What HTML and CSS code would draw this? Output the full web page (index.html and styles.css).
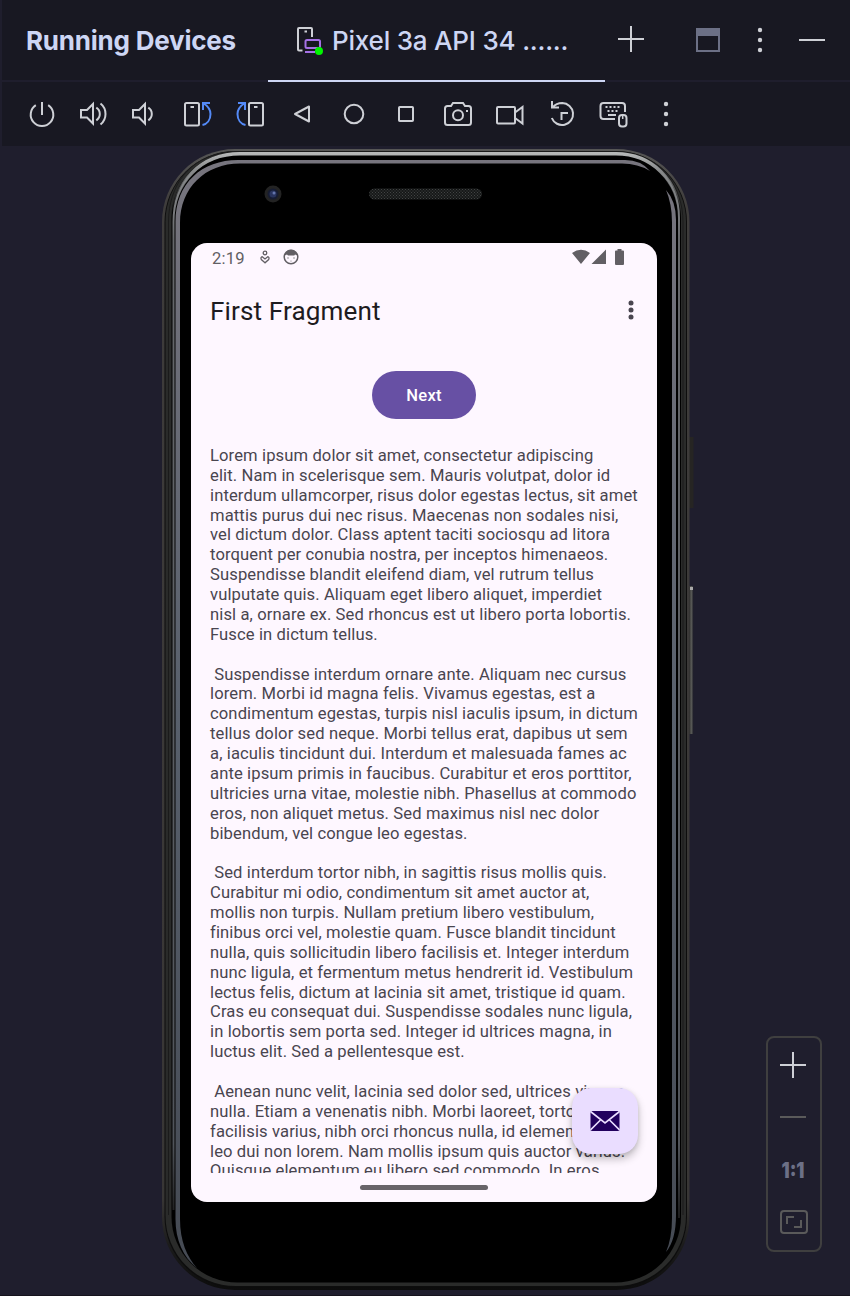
FILE: index.html
```html
<!DOCTYPE html>
<html lang="en">
<head>
<meta charset="utf-8">
<title>Running Devices</title>
<link rel="stylesheet" href="styles.css">
</head>
<body>
<div class="window">
  <header class="tabbar">
    <h1 class="tool-title">Running Devices</h1>
    <div class="tab">
      <svg class="tab-icon" width="28" height="30" viewBox="0 0 28 30" fill="none" stroke-width="2">
        <path d="M6.500 25.500H3Q2 25.500 2 24.500V4Q2 3 3 3H15Q16 3 16 4V12M8.500 6.500H11" stroke="#ced0d6"/>
        <rect x="9.500" y="15" width="14.500" height="8" rx="1.500" stroke="#a571e6"/>
        <path d="M9 27H19" stroke="#a571e6"/>
        <circle cx="23" cy="26" r="4" fill="#00f500"/>
      </svg>
      <span class="tab-label">Pixel 3a API 34 ......</span>
    </div>
    <svg class="add" width="28" height="28" viewBox="0 0 28 28" stroke="#ced0d6" stroke-width="2"><path d="M14 1V27M1 14H27"/></svg>
    <svg class="win-icon" width="24" height="24" viewBox="0 0 24 24"><path d="M1 1H23V23H1Z" fill="none" stroke="#6c7086" stroke-width="2"/><path d="M0 0H24V8H0Z" fill="#6c7086"/></svg>
    <svg class="more" width="6" height="26" viewBox="0 0 6 26" fill="#ced0d6"><circle cx="3" cy="3" r="2.200"/><circle cx="3" cy="13" r="2.200"/><circle cx="3" cy="23" r="2.200"/></svg>
    <svg class="hide" width="26" height="2" viewBox="0 0 26 2"><path d="M0 1H26" stroke="#ced0d6" stroke-width="2"/></svg>
  </header>

  <nav class="toolbar">
    <svg class="tool" viewBox="0 0 32 32"><path d="M16 4V17M9.800 7.200A11.300 11.300 0 1 0 22.200 7.200"/></svg>
    <svg class="tool" viewBox="0 0 32 32"><path d="M3 12H9L15 6V25.500L9 19.500H3ZM18.300 9.700Q21.800 12 21.800 16T18.300 22.300M22.500 5.500Q27.500 9.500 27.500 16T22.500 26.500"/></svg>
    <svg class="tool" viewBox="0 0 32 32"><path d="M3 12H9L15 6V25.500L9 19.500H3ZM18.300 9.700Q21.800 12 21.800 16T18.300 22.300"/></svg>
    <svg class="tool" viewBox="0 0 32 32"><rect x="3" y="5" width="14" height="22.500" rx="1.500"/><path d="M8.500 9H12"/><path class="blue" d="M28 5H21V12M21 5C26 8 28.500 12 28.500 16C28.500 22 25 26 20.500 27"/></svg>
    <svg class="tool" viewBox="0 0 32 32"><g transform="translate(32 0) scale(-1 1)"><rect x="3" y="5" width="14" height="22.500" rx="1.500"/><path d="M8.500 9H12"/><path class="blue" d="M28 5H21V12M21 5C26 8 28.500 12 28.500 16C28.500 22 25 26 20.500 27"/></g></svg>
    <svg class="tool" viewBox="0 0 32 32"><path d="M23 8.500V23.500L9 16Z" stroke-linejoin="round"/></svg>
    <svg class="tool" viewBox="0 0 32 32"><circle cx="16" cy="16" r="9.300"/></svg>
    <svg class="tool" viewBox="0 0 32 32"><rect x="9" y="9" width="14" height="14" rx=".8"/></svg>
    <svg class="tool" viewBox="0 0 32 32"><path d="M5.500 8H9L11 5H21L23 8H26.500Q29 8 29 10.500V24.500Q29 27 26.500 27H5.500Q3 27 3 24.500V10.500Q3 8 5.500 8Z"/><circle cx="16" cy="17.300" r="5"/><path d="M24 13H26"/></svg>
    <svg class="tool" viewBox="0 0 32 32"><rect x="3" y="9" width="18" height="16.500" rx="1"/><path d="M21 14.500L28.500 9V25.500L21 20"/></svg>
    <svg class="tool" viewBox="0 0 32 32"><path d="M6 3V9.500H13M6.500 9.500C9 6.500 12.500 5 16.300 5A11 11 0 1 1 5.800 20M15.500 22V15H22"/></svg>
    <svg class="tool" viewBox="0 0 32 32"><path d="M17 21H5.500Q2.500 21 2.500 18V8Q2.500 5 5.500 5H24Q27 5 27 8V14"/><path d="M7.500 9H22.500" stroke-dasharray="2 2"/><path d="M9.500 13H21" stroke-dasharray="2 2"/><path d="M10 17H18"/><rect x="21" y="17" width="7.500" height="11.500" rx="3"/><path d="M24.700 17V21" stroke-width="1.500"/></svg>
    <svg class="tool" viewBox="0 0 32 32"><g fill="#ced0d6" stroke="none"><circle cx="16" cy="6" r="2.200"/><circle cx="16" cy="16" r="2.200"/><circle cx="16" cy="26" r="2.200"/></g></svg>
  </nav>

  <main class="stage">
    <div class="phone">
      <svg class="shell" width="534" height="1146" viewBox="160 147 534 1146" fill="none">
        <defs>
          <linearGradient id="body" x1="0" y1="0" x2="0" y2="1"><stop offset="0" stop-color="#565655"/><stop offset=".05" stop-color="#3e3c3b"/><stop offset=".92" stop-color="#383635"/><stop offset=".96" stop-color="#1c1c1c"/><stop offset="1" stop-color="#0c0c0c"/></linearGradient>
          <linearGradient id="rim" x1="0" y1="0" x2="0" y2="1"><stop offset="0" stop-color="#c4c6c6"/><stop offset=".03" stop-color="#8b8d8f"/><stop offset=".08" stop-color="#66686b"/><stop offset=".93" stop-color="#50545a"/><stop offset="1" stop-color="#1c1c1c"/></linearGradient>
          <linearGradient id="glint" gradientUnits="userSpaceOnUse" x1="0" y1="152" x2="0" y2="215"><stop offset="0" stop-color="#b9bbbb"/><stop offset=".3" stop-color="#87898a"/><stop offset="1" stop-color="#66686b" stop-opacity="0"/></linearGradient>
          <linearGradient id="slate" x1="0" y1="0" x2="0" y2="1"><stop offset="0" stop-color="#77757e"/><stop offset=".5" stop-color="#58606c"/><stop offset="1" stop-color="#454a53"/></linearGradient>
          <linearGradient id="key" x1="0" y1="0" x2="1" y2="0"><stop offset="0" stop-color="#222"/><stop offset=".5" stop-color="#5c5d59"/><stop offset="1" stop-color="#20202a"/></linearGradient>
          <pattern id="mesh" width="3" height="3" patternUnits="userSpaceOnUse"><path d="M0 0H3V3H0Z" fill="#171919"/><path d="M0 0H1V1H0ZM1.500 1.500H2.500V2.500H1.500Z" fill="#424444"/></pattern>
        </defs>
        <path d="M689 437H693.500V508H689Z" fill="#262523"/>
        <path d="M689 586H693.500V734H689Z" fill="url(#key)"/>
        <path d="M690 587H693V590H690Z" fill="#aaa"/>
        <rect x="162" y="149" width="527.500" height="1141" rx="73" fill="url(#body)"/>
        <rect x="164.500" y="151" width="522.500" height="1136.500" rx="71" fill="#0d0d0d"/>
        <rect x="165.500" y="151.500" width="520.500" height="1134.500" rx="70" fill="#2a2b2a"/>
        <rect x="171.500" y="152" width="509.500" height="1130.500" rx="66" fill="#000"/>
        <path d="M168.500 1215V222C168.500 185 190 157 225 153H628C662 157 683 188 683 222V1215" stroke="#1b1b1b" stroke-width="1"/>
        <path d="M173.500 1210V222C173.500 182 201 153.800 240 153.800H616C651 153.800 679 180 679 218V1218" stroke="url(#rim)" stroke-width="2"/>
        <path d="M173 222C173 182 201 153.800 240 153.800H616C651 153.800 679.500 180 679.500 218" stroke="url(#glint)" stroke-width="3.500"/>
        <path d="M175.500 1219V222C175.500 183 202 160 238 160H625Q641 160 650 171Q638 163.500 622 163.500H240C205 163.500 180 188 180 223V1219C180 1241 187 1257 197 1268C183 1257 175.500 1240 175.500 1219ZM666 190Q676 201 676 220V1215Q676 1240 666 1252Q672 1238 672 1218V222Q672 204 666 190Z" fill="url(#slate)"/>
        <circle cx="273" cy="194" r="8.500" fill="#232323"/><circle cx="273" cy="194" r="5.500" fill="#161c32"/><circle cx="273" cy="194" r="3.500" fill="#29345e"/><circle cx="274" cy="193" r="1.500" fill="#6475ac"/>
        <rect x="369" y="188.500" width="113" height="11" rx="5.500" fill="url(#mesh)"/>
      </svg>
      <section class="screen">
        <div class="status">
          <span class="clock">2:19</span>
          <svg class="s-person" width="10" height="15" viewBox="0 0 10 15" fill="none" stroke="#625f64" stroke-width="1.300"><circle cx="5" cy="3" r="1.800"/><path d="M5 12.800L1.300 9.500Q.3 7.500 2.200 6.700L5 9L7.800 6.700Q9.700 7.500 8.700 9.500Z"/></svg>
          <svg class="s-face" width="16" height="16" viewBox="0 0 16 16"><circle cx="8" cy="8" r="6.800" fill="none" stroke="#625f64" stroke-width="1.500"/><path d="M1.500 6.500Q3 .8 8 .8T14.500 6.500L12 5.500L11.300 6.500H5L4 5.500Z" fill="#625f64"/><g fill="#777"><circle cx="5" cy="9" r=".7"/><circle cx="11" cy="9" r=".7"/><circle cx="8" cy="12" r=".6"/></g></svg>
          <svg class="s-right" width="53" height="16" viewBox="0 0 53 16" fill="#625f64"><path d="M0 4Q9-2.500 18 4L9 15ZM34 .5V15H19.500ZM43 2.500Q43 1.500 44 1.500H45.500V0H49.500V1.500H51Q52 1.500 52 2.500V15Q52 16 51 16H44Q43 16 43 15Z"/></svg>
        </div>
        <div class="appbar">
          <h2 class="app-title">First Fragment</h2>
          <svg width="6" height="20" viewBox="0 0 6 20" fill="#49454f"><circle cx="3" cy="3" r="2.500"/><circle cx="3" cy="10" r="2.500"/><circle cx="3" cy="17" r="2.500"/></svg>
        </div>
        <div class="content">
          <button class="next">Next</button>
          <div class="lorem">Lorem ipsum dolor sit amet, consectetur adipiscing
elit. Nam in scelerisque sem. Mauris volutpat, dolor id
interdum ullamcorper, risus dolor egestas lectus, sit amet
mattis purus dui nec risus. Maecenas non sodales nisi,
vel dictum dolor. Class aptent taciti sociosqu ad litora
torquent per conubia nostra, per inceptos himenaeos.
Suspendisse blandit eleifend diam, vel rutrum tellus
vulputate quis. Aliquam eget libero aliquet, imperdiet
nisl a, ornare ex. Sed rhoncus est ut libero porta lobortis.
Fusce in dictum tellus.

 Suspendisse interdum ornare ante. Aliquam nec cursus
lorem. Morbi id magna felis. Vivamus egestas, est a
condimentum egestas, turpis nisl iaculis ipsum, in dictum
tellus dolor sed neque. Morbi tellus erat, dapibus ut sem
a, iaculis tincidunt dui. Interdum et malesuada fames ac
ante ipsum primis in faucibus. Curabitur et eros porttitor,
ultricies urna vitae, molestie nibh. Phasellus at commodo
eros, non aliquet metus. Sed maximus nisl nec dolor
bibendum, vel congue leo egestas.

 Sed interdum tortor nibh, in sagittis risus mollis quis.
Curabitur mi odio, condimentum sit amet auctor at,
mollis non turpis. Nullam pretium libero vestibulum,
finibus orci vel, molestie quam. Fusce blandit tincidunt
nulla, quis sollicitudin libero facilisis et. Integer interdum
nunc ligula, et fermentum metus hendrerit id. Vestibulum
lectus felis, dictum at lacinia sit amet, tristique id quam.
Cras eu consequat dui. Suspendisse sodales nunc ligula,
in lobortis sem porta sed. Integer id ultrices magna, in
luctus elit. Sed a pellentesque est.

 Aenean nunc velit, lacinia sed dolor sed, ultrices viverra
nulla. Etiam a venenatis nibh. Morbi laoreet, tortor id
facilisis varius, nibh orci rhoncus nulla, id elementum
leo dui non lorem. Nam mollis ipsum quis auctor varius.
Quisque elementum eu libero sed commodo. In eros</div>
        </div>
        <div class="gesture"><span class="pill"></span></div>
        <button class="fab" aria-label="Mail">
          <svg width="30" height="22" viewBox="0 0 30 22"><rect x=".5" y="1" width="29" height="20" rx="1.500" fill="#21005d"/><path d="M.5 1.500L15 13L29.500 1.500M.5 20L10.500 10M29.500 20L19.500 10" fill="none" stroke="#eaddff" stroke-width="1.600"/></svg>
        </button>
      </section>
    </div>
    <aside class="zoom">
      <svg width="26" height="26" viewBox="0 0 26 26"><path d="M13 0V26M0 13H26" stroke="#ced0d6" stroke-width="2"/></svg>
      <svg width="26" height="26" viewBox="0 0 26 26"><path d="M0 13H26" stroke="#5a5a5a" stroke-width="2"/></svg>
      <svg class="ratio" width="26" height="26"><text x="1.500" y="22" textLength="23" lengthAdjust="spacingAndGlyphs">1:1</text></svg>
      <svg width="28" height="24" viewBox="0 0 28 24" fill="none" stroke="#5a5a5a" stroke-width="2"><rect x="1" y="1" width="26" height="22" rx="3"/><path d="M7 14V7H14M14 17H21V10"/></svg>
    </aside>
  </main>
</div>
</body>
</html>
```
FILE: styles.css
```css
* { box-sizing: border-box; }
body { margin: 0; background: #1f1e2d; font-family: Inter, sans-serif; }
h1, h2 { margin: 0; font-weight: inherit; font-size: inherit; }
button { border: 0; padding: 0; font: inherit; }
svg { display: block; flex: none; }

.window { height: 1296px; display: flex; flex-direction: column; overflow: hidden; border-bottom: 1px solid #15131c; }

.tabbar { height: 82px; margin-left: 2px; padding-left: 24px; display: flex; align-items: center; background: #181822; border-bottom: 2px solid #1f1e2d; color: #cdd6f4; font-size: 26px; white-space: nowrap; }
.tool-title { width: 242px; font-weight: 700; letter-spacing: -.22px; }
.tab { width: 337px; height: 82px; margin-bottom: -2px; padding: 0 0 2px 28px; display: flex; align-items: center; gap: 8px; border-bottom: 2px solid #cdd6f4; }
.tab-icon { margin-top: 1px; }
.tab-label { padding-top: 2px; font-weight: 450; letter-spacing: -.2px; }
.add { margin: -3px 0 0 12px; }
.win-icon { margin-left: 51px; }
.more { margin-left: 37px; }
.hide { margin-left: 36px; }

.toolbar { height: 64px; margin-left: 2px; padding-left: 14px; display: flex; align-items: center; background: #181822; }
.tool { width: 32px; height: 32px; margin: 0 10px; fill: none; stroke: #ced0d6; stroke-width: 2; }
.tool .blue { stroke: #548af7; }

.stage { flex: 1; display: flex; padding-left: 160px; }
.phone { position: relative; width: 534px; padding: 97px 0 0 31px; }
.shell { position: absolute; left: 0; top: 1px; }

.screen { position: relative; width: 466px; height: 959px; display: flex; flex-direction: column; background: #fef7ff; border-radius: 16px; overflow: hidden; font-family: Roboto, sans-serif; }
.status { height: 28px; padding-left: 21px; display: flex; align-items: center; color: #625f64; font-size: 16.6px; }
.clock { width: 48px; padding-top: 2px; letter-spacing: .2px; }
.s-face { margin-left: 13px; }
.s-right { margin-left: 273px; }
.appbar { height: 80px; padding: 0 23px 0 19px; display: flex; align-items: center; justify-content: space-between; color: #1d1b20; }
.app-title { font-size: 26.1px; letter-spacing: .12px; }
.appbar svg { margin-top: -3px; }
.content { height: 822px; padding: 20px 0 0 19px; overflow: hidden; }
.next { display: block; width: 104px; height: 48px; margin-left: 162px; border-radius: 24px; background: #6750a4; color: #fff; font-size: 16.6px; font-weight: 500; letter-spacing: .2px; }
.lorem { margin-top: 26.900px; color: #49454f; font-size: 16.6px; line-height: 19.87px; letter-spacing: .11px; white-space: pre; }
.gesture { flex: 1; display: flex; justify-content: center; padding-top: 12px; }
.pill { width: 128px; height: 5px; border-radius: 3px; background: #686469; }
.fab { position: absolute; right: 19px; bottom: 48px; width: 66px; height: 66px; display: flex; align-items: center; justify-content: center; border-radius: 19px; background: #eaddff; box-shadow: 0 5px 9px rgba(0, 0, 0, .24), 0 1px 4px rgba(0, 0, 0, .1); }

.zoom { width: 56px; height: 216px; margin: 890px 0 0 72px; padding: 14px 0 0 12px; display: flex; flex-direction: column; align-items: flex-start; border: 2px solid #3f3f3f; border-radius: 8px; }
.zoom svg + svg { margin-top: 26px; }
.zoom .ratio + svg { margin-top: 28px; }
.ratio { overflow: visible; }
.ratio text { fill: #6c7086; font-size: 21px; font-weight: 900; }
```
